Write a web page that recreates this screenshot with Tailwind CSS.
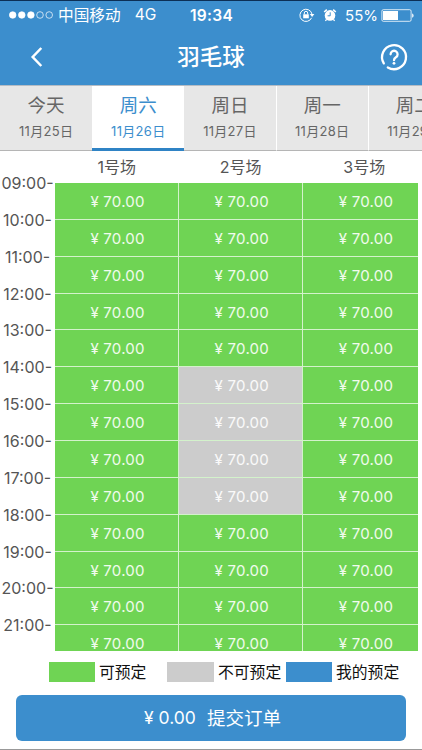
<!DOCTYPE html>
<html lang="zh-CN">
<head>
  <meta charset="UTF-8" />
  <meta name="viewport" content="width=device-width, initial-scale=1.0"/>
  <title>羽毛球</title>
  <script src="https://cdn.jsdelivr.net/npm/@tailwindcss/browser@4"></script>
</head>
<body class="bg-white font-['Inter','Noto_Sans_CJK_SC',sans-serif]">
  <div class="w-[422px] h-[750px] overflow-hidden flex flex-col border-t border-[#0c2f55] border-b-[#999] border-b">
    <header class="h-[84px] shrink-0 bg-[#3c8ecd] text-white">
      <!-- status bar -->
      <div class="h-7 grid grid-cols-[1fr_auto_1fr] items-center pl-[9px] pr-2">
        <div class="flex items-center">
          <svg class="mr-1" width="45" height="8" viewBox="0 0 45 8" fill="#fff" stroke="#fff" stroke-width=".7">
            <circle cx="3.7" cy="4" r="3.3"/><circle cx="12.8" cy="4" r="3.3"/><circle cx="21.9" cy="4" r="3.3"/>
            <circle cx="31" cy="4" r="3.3" fill="none"/><circle cx="40.2" cy="4" r="3.3" fill="none"/>
          </svg>
          <span class="text-[15.7px] leading-none pt-px">中国移动</span>
          <span class="text-[15.5px] leading-none ml-[14px]">4G</span>
        </div>
        <div class="text-[15.5px] font-semibold leading-none tracking-[.3px] pt-px">19:34</div>
        <div class="flex items-center justify-end">
          <svg class="mr-2" width="16" height="14" viewBox="0 0 16 14" fill="none" stroke="#fff" stroke-width="1">
            <path d="M12.6 9.8A6.1 6.1 0 1 1 13 6.2"/>
            <path d="M10.8 6h4.6l-2.3 3z" fill="#fff" stroke="none"/>
            <path d="M4.2 6.3h5.6v4H4.2z" fill="#fff" stroke="none"/>
            <path d="M5.3 6.4V5a1.7 1.7 0 0 1 3.4 0v1.4"/>
          </svg>
          <svg class="mr-2" width="14" height="14" viewBox="0 0 14 14" fill="none" stroke="#fff">
            <circle cx="7" cy="7.4" r="5.3" fill="#fff" stroke="none"/>
            <path d="M1.2 4 3.8 1.6M12.8 4 10.2 1.6" stroke-width="1.6"/>
            <path d="m3.6 11.3-1.2 1.6m8-1.6 1.2 1.6" stroke-width="1.3"/>
            <path d="M7.2 4.3v3.5H4.6" stroke="#3c8ecd"/>
          </svg>
          <span class="text-[15px] leading-none mr-[3px] pt-px">55%</span>
          <svg width="33" height="13" viewBox="0 0 33 13" fill="none" stroke="#fff">
            <rect x=".9" y=".7" width="29.2" height="11.6" rx="1.4" stroke-width=".8"/>
            <path d="M2 2h15v9H2z" fill="#fff" stroke="none"/>
            <path d="M31.2 4.4c1.8.5 1.8 3.7 0 4.2z" fill="#fff" stroke="none"/>
          </svg>
        </div>
      </div>
      <div class="h-[55px] grid grid-cols-[1fr_auto_1fr] items-center pl-[30px] pr-[13px]">
        <svg width="14" height="22" viewBox="0 0 14 22" fill="none" stroke="#fff" stroke-width="2.5"><path d="M11.3 2 2.7 11l8.6 9"/></svg>
        <h1 class="text-[22.5px] font-medium leading-none -ml-[17px] pt-px">羽毛球</h1>
        <svg class="justify-self-end" width="30" height="30" viewBox="0 0 30 30" fill="none" stroke="#fff" stroke-width="2.3" stroke-linecap="round">
          <path d="M4.8 21.4A12 12 0 1 1 8.8 25.4"/>
          <path d="M11.6 12.3a3.5 3.5 0 1 1 5.3 3c-1.4.9-1.9 1.3-1.9 2.9"/>
          <circle cx="15" cy="21.3" r="1.4" fill="#fff" stroke="none"/>
        </svg>
      </div>
    </header>

    <nav id="days" class="h-[66px] shrink-0 flex overflow-hidden border-t border-[#b5bcc4]"></nav>

    <div class="h-8 shrink-0 pl-[55px] flex overflow-hidden text-[#555] text-base leading-[33px]">
      <div class="w-[123.7px] shrink-0 text-center">1号场</div>
      <div class="w-[123.7px] shrink-0 text-center">2号场</div>
      <div class="w-[123.7px] shrink-0 text-center">3号场</div>
    </div>

    <main class="h-[468px] shrink-0 flex">
      <div id="hours" class="w-[55px] shrink-0 -mt-[18px] text-center text-base text-[#555]"></div>
      <div class="w-[363px] h-full overflow-hidden">
        <div id="slots" class="w-[372.6px] grid grid-cols-3"></div>
      </div>
    </main>

    <div class="h-[44px] shrink-0 pl-[49px] pb-[2px] flex items-center text-[15.8px] leading-none text-[#111]">
      <i class="w-[46px] h-5 bg-[#6fd454]"></i><span class="ml-1 w-[68px] whitespace-nowrap pt-[2px]">可预定</span>
      <i class="w-[47px] h-5 bg-[#ccc]"></i><span class="ml-1 w-[68px] whitespace-nowrap pt-[2px]">不可预定</span>
      <i class="w-[46px] h-5 bg-[#3c8ecd]"></i><span class="ml-1 whitespace-nowrap pt-[2px]">我的预定</span>
    </div>

    <button class="h-[46px] shrink-0 ml-4 w-[390px] rounded-md bg-[#3c8ecd] text-white text-[18.5px] leading-none flex items-center justify-center gap-[11px] pl-[3px]">
      <span class="text-[17.5px]">¥ 0.00</span><span>提交订单</span>
    </button>
  </div>

  <script>
    const days = [
      ["今天", "11月25日"],
      ["周六", "11月26日"],
      ["周日", "11月27日"],
      ["周一", "11月28日"],
      ["周二", "11月29日"]
    ];
    const selected = 1;

    document.getElementById("days").innerHTML = days.map(([name, date], i) => {
      const state = i === selected
        ? "bg-white text-[#3c8ecd] border-b-[3px] border-b-[#2f83c5]"
        : "bg-[#e7e7e7] text-[#666] border-b border-b-[#b5b5b5]";
      const divider = i === selected || i === selected - 1 ? "" : "border-r border-r-white";
      return `<div class="w-[92.2px] shrink-0 h-full pt-2 text-center whitespace-nowrap ${state} ${divider}">
        <div class="text-[18.5px] leading-[22px]">${name}</div>
        <div class="text-[13px] leading-4 mt-[7px] tracking-[.3px]">${date}</div>
      </div>`;
    }).join("");

    let hours = "";
    for (let h = 9; h <= 21; h++) {
      hours += `<div class="h-[36.87px] leading-[36.87px]">${String(h).padStart(2, "0")}:00-</div>`;
    }
    document.getElementById("hours").innerHTML = hours;

    let slots = "";
    for (let h = 9; h <= 21; h++) {
      for (let court = 1; court <= 3; court++) {
        const taken = court === 2 && h >= 14 && h <= 17;
        slots += `<div class="h-[36.87px] leading-[38px] pl-[2px] text-center text-[15px] tracking-[.25px] text-white/90 border-r border-b border-[#d3f2cb] ${taken ? "bg-[#ccc]" : "bg-[#6fd454]"}">¥ 70.00</div>`;
      }
    }
    document.getElementById("slots").innerHTML = slots;
  </script>
</body>
</html>
